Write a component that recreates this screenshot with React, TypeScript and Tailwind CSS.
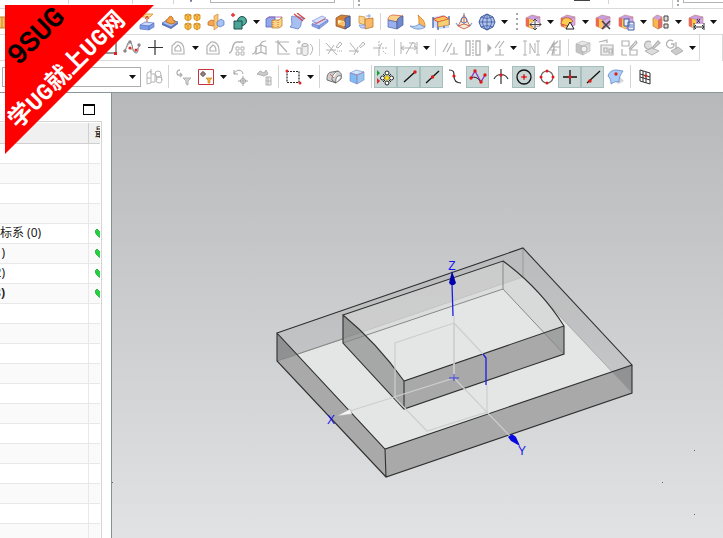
import { ReactNode } from "react";
import clsx from "clsx";

const GREY = "#b2b2b2";
const DARK = "#333333";

function Cube({ top, left, right, edge }: { top: string; left: string; right: string; edge: string }) {
  return (
    <g stroke={edge} strokeWidth="0.6">
      <path d="M2 5 8 2 16 4 9 7Z" fill={top} />
      <path d="M2 5 9 7 9 16 2 13Z" fill={left} />
      <path d="M9 7 16 4 16 12 9 16Z" fill={right} />
    </g>
  );
}

const purpleCube = (
  <g>
    <Cube top="#c79fe2" left="#fbb040" right="#d3a9ea" edge="#c07a86" />
    <path d="M2 5 5 6V14L2 13Z" fill="#ee6a50" />
    <path d="M5 6 9 7V16L5 14Z" fill="#fdc751" />
  </g>
);

const icons: Record<string, ReactNode> = {
  pattern: (
    <g fill="#f7c36a" stroke="#c98321">
      <path d="M0 4H11V15H0Z M4 4V15 M8 4V15" />
    </g>
  ),
  extrude: (
    <g>
      <path d="M5 3 8 1 15 1 12 4 4 4Z" fill="#fbe0a0" stroke="#e0a040" />
      <path d="M9 9V4M7 6 9 3 11 6" fill="none" stroke="#cf4a28" />
      <path d="M2 12 7 9 16 10 11 13Z" fill="#cfdcff" stroke="#5d79c8" strokeWidth="0.7" />
      <path d="M2 12 11 13V17L2 16ZM11 13 16 10V14L11 17Z" fill="#809be5" stroke="#5d79c8" strokeWidth="0.7" />
    </g>
  ),
  emboss: (
    <g>
      <path d="M1 10 8 6 17 9 10 14Z" fill="#a9bff0" stroke="#4565b0" strokeWidth="0.7" />
      <path d="M1 10 10 14V16L1 12ZM10 14 17 9V11L10 16Z" fill="#5874ba" />
      <path d="M5 9V7L7 6 8 4 10 3 12 5V7L14 8V10L10 11Z" fill="#f2a34a" stroke="#b86414" strokeWidth="0.8" />
    </g>
  ),
  fourCubes: (
    <g fill="#fbc14a" stroke="#d18a1c" strokeWidth="0.9">
      {[[1, 2], [10, 2], [1, 11], [10, 11]].map(([x, y]) => (
        <path key={`${x}-${y}`} d={`M${x} ${y}l3 -1 3 1v4l-3 2 -3 -2zl3 1 3 -1m-3 1v4`} />
      ))}
    </g>
  ),
  mirror: (
    <g>
      <path d="M1 9 4 7 9 8V12L6 13 1 12Z" fill="#f4a558" stroke="#b9671e" strokeWidth="0.7" />
      <path d="M7 3 11 1V14L7 17Z" fill="#fbc77a" stroke="#d08a35" strokeWidth="0.7" />
      <path d="M10 9 14 6 17 8V12L13 14 10 12Z" fill="#a9c4f4" stroke="#4c72bb" strokeWidth="0.7" />
    </g>
  ),
  unite: (
    <g>
      <circle cx="12" cy="8" r="4.5" fill="#52ad9c" stroke="#1c4f48" />
      <path d="M4 8H12V16H4Z" fill="#4aa596" stroke="#1c4f48" />
      <path d="M1 2H5M3 0V4" stroke="#e03028" strokeWidth="1.4" />
    </g>
  ),
  trimBody: (
    <g strokeWidth="0.8">
      <path d="M1 6 4 4H10V14H1Z" fill="#8fa8ed" stroke="#526bb5" />
      <path d="M7 7H14L17 4V13L14 15H7Z" fill="#fbd487" stroke="#b88432" />
      <path d="M1 6 4 4H17" fill="none" stroke="#a25db5" />
      <path d="M8 7V15M13 7V15" stroke="#d9502c" strokeDasharray="1 1" />
    </g>
  ),
  thicken: (
    <g>
      <path d="M4 3C8 5 10 2 16 6C11 9 15 13 10 16L2 14C6 11 2 7 4 3Z" fill="#a8bff2" stroke="#5d7cc6" strokeWidth="0.8" />
      <path d="M6 1 15 8M9 0 17 6" stroke="#dc4343" strokeWidth="1.3" />
    </g>
  ),
  offset: (
    <g>
      <path d="M1 11 11 5 17 7 8 13Z" fill="#c7d5fa" stroke="#6882ce" strokeWidth="0.7" />
      <path d="M1 11V13L8 16V13ZM8 13V16L17 9V7Z" fill="#8da4e6" stroke="#6882ce" strokeWidth="0.7" />
      <path d="M1 8 11 3 15 5 6 10Z" fill="#d5defa" stroke="#7f94d8" strokeWidth="0.7" />
      <path d="M4 11 14 6" stroke="#e35353" fill="none" />
    </g>
  ),
  shell: (
    <g>
      <path d="M2 5 7 2 16 3 16 13 11 16 2 13Z" fill="#d58234" stroke="#7e4f2b" strokeWidth="0.7" />
      <path d="M4 7 10 8V13L4 11Z" fill="#fff1cf" />
      <path d="M11 5 16 3V13L11 16Z" fill="#607cc4" stroke="#344f94" strokeWidth="0.7" />
      <path d="M4 11 8 8 11 9V13Z" fill="#f9c160" />
    </g>
  ),
  copyFace: (
    <g strokeWidth="0.8">
      <path d="M2 3 8 4V12L2 10Z" fill="#fad48d" stroke="#cc913c" />
      <path d="M8 6 16 5V14L8 16Z" fill="#f9b868" stroke="#bd7628" />
      <path d="M2 12H8V15H4ZM9 3H14M12 1V5" fill="#c9d7fb" stroke="#7893dc" />
    </g>
  ),
  blend: (
    <g strokeWidth="0.7">
      <path d="M2 7C2 3 5 2 8 2L17 3C13 4 11 6 11 9Z" fill="#fbd28a" stroke="#d24e36" />
      <path d="M2 7 11 9V16L2 14Z" fill="#9bb1ed" stroke="#4b65a9" />
      <path d="M11 9C11 6 13 4 17 3V12L11 16Z" fill="#6f8ad1" stroke="#3f5691" />
    </g>
  ),
  sheet: (
    <g>
      <path d="M9 2C13 6 16 7 16 14L10 12C10 8 10 5 9 2Z" fill="#fbb95b" stroke="#cf7c20" strokeWidth="0.8" />
      <path d="M1 13C5 14 8 13 10 11L16 14C12 17 6 17 1 13Z" fill="#b9d3f6" stroke="#668cc7" strokeWidth="0.8" />
    </g>
  ),
  ruled: (
    <g>
      <path d="M1 4 11 2 17 5V15L6 16 1 13Z" fill="#cddcff" />
      <path d="M1 6 12 3 17 6 6 9Z" fill="#fbc65d" stroke="#df4839" />
      <path d="M1 4V15M6 9V17M12 9V15M17 3V12" stroke="#4062ad" strokeWidth="1.3" />
      <path d="M6 9 17 6V12L6 14Z" fill="#f9cf76" stroke="#bf7427" strokeWidth="0.6" />
    </g>
  ),
  cone: (
    <g fill="none">
      <path d="M9 2 3 13 9 16 15 13Z" fill="#f6eadd" stroke="#cf6d4d" />
      <path d="M9 2V11M3 13 9 11 15 13" stroke="#cf6d4d" />
      <circle cx="9" cy="7" r="3" stroke="#5a83c2" />
      <path d="M1 10 3 13M17 10 15 13M9 2V0" stroke="#5a83c2" />
    </g>
  ),
  sphere: (
    <g fill="none" stroke="#3e5ba0">
      <path d="M9 1 15 4 17 9 15 14 9 17 3 14 1 9 3 4Z" fill="#b2c3ec" />
      <path d="M9 1V17M1 9H17M9 1C3 6 3 12 9 17M9 1C15 6 15 12 9 17M3 4Q9 7 15 4M3 14Q9 11 15 14" strokeWidth="0.8" />
    </g>
  ),
  moveFace: (
    <g>
      {purpleCube}
      <path d="M11 6V16M6 11H16" stroke="#fff" strokeWidth="3" />
      <path d="M11 6V17M6 11.5H17M9 8 11 6 13 8M9 15 11 17 13 15M8 9.5 6 11.5 8 13.5M15 9.5 17 11.5 15 13.5" fill="none" stroke="#444" />
    </g>
  ),
  resizeFace: (
    <g>
      {purpleCube}
      <path d="M2 11C3 6 5 4 10 5L14 8 9 13Z" fill="#fbce51" stroke="#ce5c35" />
      <path d="M11 9 15 16H7Z" fill="#fff" stroke="#222" />
    </g>
  ),
  deleteFace: (
    <g>
      {purpleCube}
      <path d="M8 8 16 16M16 8 8 16" stroke="#444" strokeWidth="1.6" />
    </g>
  ),
  copyBody: (
    <g>
      {purpleCube}
      <path d="M7 6H12V13H7ZM11 9H17V17H11Z" fill="#e8eeff" stroke="#435da0" />
      <path d="M12 12H16M12 14H16" stroke="#6680c0" />
    </g>
  ),
  patternFace: (
    <g>
      <path d="M1 5 5 2 10 4V14L6 16 1 13Z" fill="#f9b84a" stroke="#c3733b" strokeWidth="0.7" />
      <path d="M6 7 10 4V14L6 16Z" fill="#df6d66" />
      <path d="M1 5 5 2 10 4 6 7Z" fill="#c9a2e4" />
      <path d="M12 3H16V8H12ZM12 11H16V15H12Z" fill="#ddd" stroke="#444" />
    </g>
  ),
  linearDim: (
    <g>
      {purpleCube}
      <path d="M6 11H18V17H6Z" fill="#fff" />
      <path d="M7 10V17M17 10V17M7 14H17M9 12 7 14 9 16M15 12 17 14 15 16" stroke="#333" fill="none" />
      <path d="M10 6 13 10M13 6 10 10" stroke="#333" />
    </g>
  ),
  rect: (
    <g>
      <path d="M5 3H16V14H5" fill="none" stroke={DARK} />
      <path d="M14 13H17V16H14Z" fill="#e02020" />
    </g>
  ),
  spline: (
    <g>
      <path d="M1 13C4 10 4 2 7 3C10 4 9 14 13 14C16 14 14 8 17 7" fill="none" stroke="#777" />
      <path d="M1 12 7 3M7 9 12 13 17 6" stroke="#aaa" fill="none" />
      <g fill="#8a8a8a">
        <circle cx="2" cy="12" r="1.7" /><circle cx="7" cy="3" r="1.7" /><circle cx="16" cy="6" r="1.7" />
      </g>
      <g fill="#dc3030">
        <circle cx="7" cy="9" r="1.6" /><circle cx="13" cy="11" r="1.6" />
      </g>
    </g>
  ),
  plus: <path d="M9 1V16M2 8.5H17" stroke={DARK} strokeWidth="1.2" />,
  offsetCurve: (
    <g fill="none" stroke={GREY} strokeWidth="1.2">
      <path d="M3 15V7L7 3C12 2 15 6 15 11V15Z" />
      <path d="M6 12V9L9 6C11 7 12 9 12 12Z" />
    </g>
  ),
  curvePattern: (
    <g fill="none" stroke={GREY}>
      <path d="M2 14C7 14 4 3 10 3H16" strokeWidth="1.5" />
      <path d="M9 8H12V11H9ZM14 8H17V11H14ZM9 13H12V16H9ZM14 13H17V16H14Z" />
    </g>
  ),
  projectCurve: (
    <g fill="none" stroke={GREY} strokeWidth="1.2">
      <path d="M2 15C6 15 5 12 7 9M10 6C11 3 13 2 16 2" />
      <path d="M6 8 11 6V13L6 15ZM11 6 16 8V15L11 13Z" />
    </g>
  ),
  trimCurve: (
    <g fill="none" stroke={GREY} strokeWidth="1.2">
      <path d="M2 3H16M5 1V15H17M5 3 14 13" />
    </g>
  ),
  cylinder: (
    <g fill="#eee" stroke={GREY}>
      <path d="M6 6V15C7 17 11 17 12 15V6Z" />
      <ellipse cx="9" cy="6" rx="3" ry="1.5" />
      <path d="M1 3H5M3 1V5M14 5C18 8 17 12 14 16M1 9H5V15H1Z" fill="none" />
    </g>
  ),
  quickTrim: (
    <g fill="none" stroke={GREY}>
      <path d="M1 4 12 16M3 15 9 6M1 11H11" />
      <path d="M11 8 15 3 17 5 13 9Z" />
      <path d="M12 12H17" strokeDasharray="1 1" />
    </g>
  ),
  quickExtend: (
    <g fill="none" stroke={GREY}>
      <path d="M2 4 10 14M1 12H11M6 16 10 8M11 8 15 3 17 5 12 9" />
    </g>
  ),
  corner: (
    <g fill="none" stroke={GREY}>
      <path d="M2 9H10M8 17V9L11 4" />
      <path d="M11 9H17M8 2V7M12 12 15 15" strokeDasharray="2 1" />
    </g>
  ),
  rapidDim: (
    <g fill="none" stroke={GREY}>
      <path d="M1 3V15M17 3V15M1 9H17M4 7 1 9 4 11M14 7 17 9 14 11M6 15 13 3M9 4H15V8" />
    </g>
  ),
  constraint: <path d="M2 13 7 4M6 13 11 4M9 15H17M13 15V8" fill="none" stroke={GREY} strokeWidth="1.2" />,
  symmetric: (
    <g fill="none" stroke={GREY} strokeWidth="1.3">
      <path d="M6 2H2V16H6V6ZM12 2H16V16H12V6Z" />
      <path d="M9 1V17" strokeDasharray="2 1" />
    </g>
  ),
  autoConstraint: (
    <g fill="none" stroke={GREY} strokeWidth="1.2">
      <path d="M1 6V12L4 9Z" fill={GREY} />
      <path d="M8 9 13 2M12 9 17 2M8 16H17M13 16V10" />
    </g>
  ),
  showConstraint: (
    <g fill="none" stroke={GREY}>
      <path d="M1 2H5M1 16H5M3 2V16M8 4V15M16 2V16M14 2H18M14 16H18M8 5 13 14V4" />
    </g>
  ),
  convertRef: (
    <g fill="none" stroke={GREY}>
      <path d="M2 15 9 3V15M4 11H12M13 2 6 9M9 8H15V16H7ZM15 1V11" strokeWidth="1.2" />
    </g>
  ),
  greyCube: (
    <g>
      <Cube top="#e5e5e5" left="#c4c4c4" right="#dadada" edge={GREY} />
      <circle cx="10" cy="10" r="3" fill="#f2f2f2" stroke={GREY} />
    </g>
  ),
  greyFrame: (
    <g fill="#eee" stroke={GREY}>
      <path d="M2 3 10 1V4M4 6H16V16H4ZM7 9H10V13H7ZM12 10H15V14H12Z" strokeWidth="1.2" />
    </g>
  ),
  greySwap: (
    <g fill="none" stroke={GREY} strokeWidth="1.2">
      <path d="M2 2H9V7H2ZM10 11H17V16H10ZM2 10V16H7M9 10 16 2 17 4 10 11" />
    </g>
  ),
  greyPen: (
    <g fill="#ddd" stroke={GREY}>
      <path d="M2 12 9 9 16 12 9 16Z" />
      <path d="M8 3A4 4 0 1 0 9 8M9 9 15 2 17 4 10 10" strokeWidth="1.2" />
    </g>
  ),
  greyUpdate: (
    <g fill="#ccc" stroke={GREY}>
      <path d="M5 12 12 8 17 12 10 16Z" />
      <path d="M7 2A4 4 0 1 0 8 7V5H5M10 3V10" fill="none" strokeWidth="1.3" />
    </g>
  ),
  assembly: (
    <g fill="none" stroke="#b5b5b5">
      <path d="M2 5 6 3V15L2 16ZM6 6H10V14H6M2 10H6M6 1V5" />
      <circle cx="13" cy="6" r="3" /><circle cx="14" cy="12" r="3" /><path d="M11 7 12 12M16 7 17 12" />
    </g>
  ),
  filterGrey: (
    <g fill="#d4d4d4" stroke={GREY}>
      <path d="M9 10H17L14 13V17L12 16V13Z" />
      <path d="M6 2C3 2 2 5 4 7H8M6 5 8 7 6 9" fill="none" strokeWidth="1.3" />
    </g>
  ),
  filterRed: (
    <g>
      <path d="M1.5 1.5H16.5V16.5H1.5Z" fill="#fff" stroke="#c8323a" />
      <circle cx="6" cy="6" r="2" fill="none" stroke="#8a5555" /><path d="M6 3V9M3 6H9" stroke="#444" strokeWidth="0.8" />
      <path d="M9 10H15L13 12V15L11 15V12Z" fill="#f9b339" stroke="#cf8416" strokeWidth="0.7" />
    </g>
  ),
  rotateGrey: (
    <g fill="none" stroke="#a0a0a0">
      <path d="M2 2V6H6M2 6C4 1 10 1 11 6" />
      <path d="M11 8V18M6 13H16" /><circle cx="11" cy="13" r="2.5" />
    </g>
  ),
  moveGrey: (
    <g fill="#ccc" stroke="#b0b0b0">
      <path d="M2 6 5 3 9 5 11 2 13 6 9 8Z" />
      <path d="M11 9H16V17H11ZM11 13H16M13 9V17" fill="#eee" />
    </g>
  ),
  marquee: (
    <g>
      <path d="M3 3.5H15V14.5H3Z" fill="none" stroke="#222" strokeDasharray="2 1" strokeWidth="1.2" />
      <circle cx="3" cy="3" r="1.5" fill="#e02828" /><circle cx="16" cy="15" r="1.5" fill="#e02828" />
    </g>
  ),
  wireBody: (
    <g stroke="#555" strokeWidth="0.8">
      <path d="M2 11C2 6 4 4 7 4L13 3C17 5 17 8 16 11L11 15 2 12Z" fill="#cfcfcf" />
      <path d="M7 12C7 7 9 5 13 3M11 15C10 9 13 7 16 8M7 12 11 15" fill="#fff" />
      <path d="M5 6 9 10" stroke="#df5252" />
    </g>
  ),
  blueCube: (
    <g>
      <Cube top="#cfe6ff" left="#7ebcf3" right="#98c5ee" edge="#7087c9" />
      <path d="M2 5 9 7 16 4M9 7V16" fill="none" stroke="#c07ea7" strokeDasharray="1 1" />
    </g>
  ),
  snap: (
    <g>
      <path d="M0 2V8L3 5Z" fill="#14a02c" />
      <path d="M0 10V16L3 13Z" fill="#e02828" />
      <g fill="#fff" stroke="#222">
        <circle cx="10" cy="5" r="2" /><circle cx="10" cy="15" r="2" /><circle cx="5.5" cy="10" r="2" /><circle cx="14.5" cy="10" r="2" />
        <path d="M6 6 8 8M14 6 12 8M6 14 8 12M14 14 12 12" />
      </g>
      <path d="M10 7.5 12.5 10 10 12.5 7.5 10Z" fill="#ffe22c" stroke="#c9a300" />
    </g>
  ),
  endPoint: (
    <g><path d="M4 14 15 4" stroke="#111" strokeWidth="1.3" /><circle cx="15" cy="4" r="1.7" fill="#e01818" /></g>
  ),
  midPoint: (
    <g><path d="M3 15 16 3" stroke="#111" strokeWidth="1.3" /><circle cx="9.5" cy="9" r="1.7" fill="#e01818" /></g>
  ),
  controlPoint: (
    <g>
      <path d="M3 2C8 2 8 4 8 8C8 13 10 15 15 15" fill="none" stroke="#333" strokeWidth="1.2" />
      <circle cx="8" cy="8" r="1.6" fill="#e01818" />
    </g>
  ),
  knotPoint: (
    <g>
      <path d="M2 10 6 3 12 14 16 7" fill="none" stroke="#8c33c8" strokeWidth="1.3" />
      <path d="M2 10Q7 7 12 14" fill="none" stroke="#222" />
      <g fill="#e01818">
        <circle cx="2" cy="10" r="1.7" /><circle cx="6" cy="3" r="1.7" /><circle cx="12" cy="14" r="1.7" /><circle cx="16" cy="7" r="1.7" />
      </g>
    </g>
  ),
  intersection: (
    <g>
      <path d="M9 1V16M2 11C5 5 13 5 16 11" fill="none" stroke="#333" strokeWidth="1.2" />
      <circle cx="9" cy="7" r="1.6" fill="#e01818" />
    </g>
  ),
  arcCenter: (
    <g><circle cx="9" cy="9" r="7" fill="none" stroke="#111" strokeWidth="1.3" /><path d="M6 9H12M9 6V12" stroke="#e01818" /><circle cx="9" cy="9" r="1.4" fill="#e01818" /></g>
  ),
  quadrant: (
    <g>
      <circle cx="9" cy="9" r="6" fill="none" stroke="#666" strokeWidth="1.2" />
      <g fill="#e01818">
        <circle cx="9" cy="3" r="1.5" /><circle cx="9" cy="15" r="1.5" /><circle cx="3" cy="9" r="1.5" /><circle cx="15" cy="9" r="1.5" />
      </g>
    </g>
  ),
  existing: (
    <g><path d="M9 2V16M2 9H16" stroke="#111" strokeWidth="1.3" /><circle cx="9" cy="9" r="1.7" fill="#e01818" /></g>
  ),
  onCurve: (
    <g><path d="M3 15 16 3" stroke="#111" strokeWidth="1.3" /><circle cx="6" cy="13" r="1.7" fill="#e01818" /></g>
  ),
  onFace: (
    <g>
      <path d="M9 15 12 8 17 13 12 16Z" fill="#d8d8d8" />
      <path d="M1 8C3 2 7 2 10 2L16 3C13 7 12 10 12 14C9 13 7 14 4 16C4 12 3 10 1 8Z" fill="#a9cdf6" stroke="#5f87c6" strokeWidth="0.8" />
      <circle cx="9" cy="6" r="1.7" fill="#e02020" />
    </g>
  ),
  grid: (
    <g fill="none" stroke="#333">
      <path d="M4 2 14 5V16L4 13ZM7 3V14M10 4V15M4 6 14 9M4 9 14 12" />
      <circle cx="10" cy="8" r="1.4" fill="#e02020" stroke="none" />
    </g>
  ),
};

// "|" is a separator, "v" a drop-down arrow, ":" a grip and "+name" a pressed tool
const featureTools =
  "extrude emboss fourCubes mirror unite v trimBody thicken offset shell copyFace | blend sheet ruled cone sphere v : moveFace v resizeFace v deleteFace copyBody v patternFace v linearDim v moveFace".split(" ");
const sketchTools =
  "rect spline plus offsetCurve v offsetCurve curvePattern projectCurve trimCurve cylinder | quickTrim quickExtend corner | rapidDim v | constraint symmetric autoConstraint v showConstraint convertRef | greyCube greyFrame greySwap greyPen greyUpdate v".split(" ");
const selectionTools =
  "assembly | filterGrey filterRed v rotateGrey moveGrey | marquee v | wireBody blueCube | +snap +endPoint +midPoint controlPoint +knotPoint intersection +arcCenter quadrant +existing +onCurve onFace | grid".split(" ");

function Caret() {
  return (
    <svg viewBox="0 0 7 4" className="h-1 w-[7px]">
      <path d="M0 0H7L3.5 4Z" fill="#111" />
    </svg>
  );
}

function Grip() {
  return (
    <span className="flex w-[11px] shrink-0 flex-col items-end gap-[3px] pr-[3px]">
      {[0, 1, 2, 3].map((i) => (
        <span key={i} className="size-[2px] bg-[#a8a8a8]" />
      ))}
    </span>
  );
}

function Tools({ items }: { items: string[] }) {
  return items.map((item, i) => {
    if (item === "|") {
      return (
        <span key={i} className="flex h-full w-[6px] shrink-0 justify-center py-1">
          <span className="w-px bg-[#d4d4d4]" />
        </span>
      );
    }
    if (item === ":") return <Grip key={i} />;
    if (item === "v") {
      return (
        <button key={i} aria-label="More" className="flex h-[22px] w-3 shrink-0 items-center justify-center">
          <Caret />
        </button>
      );
    }
    const pressed = item.startsWith("+");
    const name = pressed ? item.slice(1) : item;
    return (
      <button
        key={i}
        aria-label={name}
        className={clsx(
          "flex h-[22px] w-[23px] shrink-0 items-center justify-center",
          pressed && "border border-[#a5c0bc] bg-[#c8d7d5]"
        )}
      >
        <svg viewBox="0 0 18 18" className="size-[18px] shrink-0">
          {icons[name]}
        </svg>
      </button>
    );
  });
}

function Toolbars() {
  return (
    <header className="overflow-hidden border-b border-[#89979b] bg-white">
      <div className="flex h-[9px] border-b border-[#d9d9d9]">
        <span className="h-1 w-[69px] border-r border-[#d4d4d4]" />
        <span className="h-1 w-16 border-r border-[#d4d4d4]" />
        <span className="h-1 w-[41px] border-r border-[#d4d4d4]" />
        <span className="ml-4 size-[2px] rounded-b bg-[#777799]" />
        <span className="ml-[18px] h-[3px] w-[125px] border-x border-b border-[#b4b4b4]" />
        <span className="h-2 w-[19px] border-r border-[#d4d4d4]" />
        <span className="ml-1 flex flex-col gap-[2px]">
          <span className="size-[2px] bg-[#a8a8a8]" />
          <span className="size-[2px] bg-[#a8a8a8]" />
        </span>
        <span className="ml-[214px] h-px w-4 bg-[#444]" />
        <span className="h-1 w-[19px] border-r border-[#d4d4d4]" />
        <span className="h-2 w-16 border-r border-[#d4d4d4]" />
        <span className="ml-1 flex flex-col gap-[2px]">
          <span className="size-[2px] bg-[#a8a8a8]" />
          <span className="size-[2px] bg-[#a8a8a8]" />
        </span>
        <span className="ml-1 h-[3px] flex-1 border-b border-l border-[#b4b4b4]" />
      </div>
      <div className="flex h-[26px] items-center border-b border-[#d9d9d9]">
        <svg viewBox="6 0 18 18" className="size-[18px] shrink-0">{icons.pattern}</svg>
        <span className="w-[117px] shrink-0" />
        <Tools items={featureTools} />
      </div>
      <div className="flex h-[26px]">
        <div className="flex w-[700px] items-center border-r border-b border-[#d9d9d9] pl-[97px]">
          <Tools items={sketchTools} />
        </div>
        <span className="ml-auto w-px bg-[#d9d9d9]" />
      </div>
      <div className="flex h-[31px] items-center pl-[2px]">
        <div className="relative mr-px h-5 w-[139px] shrink-0">
          <select aria-label="Selection scope" className="block size-full appearance-none rounded-none border border-[#adadad] bg-white" />
          <span className="pointer-events-none absolute inset-y-0 right-[5px] flex items-center">
            <Caret />
          </span>
        </div>
        <Tools items={selectionTools} />
      </div>
    </header>
  );
}

interface TreeRow {
  label?: string;
  short?: boolean;
  bold?: boolean;
}

const rows: TreeRow[] = [
  {}, {}, {}, {},
  { label: "标系 (0)" },
  { label: ")", short: true },
  { label: "2)", short: true },
  { label: "3)", short: true, bold: true },
  ...Array.from({ length: 12 }, () => ({})),
];

function PartNavigator() {
  return (
    <aside className="flex w-28 shrink-0 flex-col overflow-hidden border-r border-[#849296] bg-white">
      <div className="flex h-7 shrink-0 items-center justify-end pr-4">
        <button aria-label="Maximize" className="mt-1 h-[11px] w-3 border border-t-2 border-black" />
      </div>
      <div className="h-0 w-[102px] flex-1 overflow-hidden border-t border-r border-[#d5d5d5] pt-px pr-px">
        <table className="w-full table-fixed border-collapse text-xs text-[#222]">
          <thead>
            <tr className="h-5 border-b border-[#cfcfcf] bg-[#f0f0f0]">
              <th className="w-[88px] border-r border-[#d0d0d0] p-0" />
              <th className="p-0 font-normal">
                <span className="block h-4 overflow-hidden pl-[6px] text-left leading-4 whitespace-nowrap">最</span>
              </th>
            </tr>
          </thead>
          <tbody>
            {rows.map((row, i) => (
              <tr key={i} className="h-5 border-b border-[#e8e8e8] even:bg-[#fafafa]">
                <td className="border-r border-[#e8e8e8] p-0">
                  <span
                    className={clsx(
                      "flex h-4 items-center overflow-hidden whitespace-nowrap",
                      row.short && "w-[5px] justify-end",
                      row.bold && "font-bold"
                    )}
                  >
                    {row.label}
                  </span>
                </td>
                <td className="p-0">
                  {row.label && (
                    <span className="block overflow-hidden pl-[6px]">
                      <svg viewBox="0 0 12 10" className="h-[10px] w-3 max-w-none">
                        <path d="M0 3 2 1 5 4 10 0 12 2 6 10 4 9 1 6Z" fill="#1fd43c" stroke="#0a8c20" strokeWidth="0.6" />
                      </svg>
                    </span>
                  )}
                </td>
              </tr>
            ))}
          </tbody>
        </table>
      </div>
    </aside>
  );
}

function Scene() {
  return (
    <main className="flex-1 bg-linear-to-b from-[#b7b8b9] to-[#e2e3e5]">
      <svg viewBox="112 93 611 445" className="block w-full" fontFamily="Liberation Sans, sans-serif">
        {/* base plate */}
        <path d="M277 361 523 277 632 393 386 477Z" fill="#e4e5e5" />
        <path d="M277 333 523 248V277L277 361Z" fill="#000" fillOpacity="0.06" />
        <path d="M523 248 632 365V393L523 277Z" fill="#000" fillOpacity="0.06" />
        <path d="M277 333 385 449 386 477 277 361Z" fill="#000" fillOpacity="0.26" />
        <path d="M385 449 632 365V393L386 477Z" fill="#000" fillOpacity="0.26" />
        <path d="M277 361 523 277 632 393" fill="none" stroke="#999" strokeOpacity="0.7" />
        <path d="M277 361 343 339" stroke="#888" />
        <path d="M523 248V277" stroke="#999" />

        {/* arched block */}
        <path d="M343 315 503 261Q540 288 564 326V354L404 409 343 343Z" fill="#e4e5e5" fillOpacity="0.6" />
        <path d="M343 315 503 261V289L343 343Z" fill="#000" fillOpacity="0.04" />
        <path d="M503 261Q540 288 564 326V354L503 289Z" fill="#000" fillOpacity="0.05" />
        <path d="M343 315Q377 343 404 381V409L343 343Z" fill="#000" fillOpacity="0.27" />
        <path d="M404 381 564 326V354L404 409Z" fill="#000" fillOpacity="0.26" />
        <path d="M343 343 503 289 564 354M503 289V261" fill="none" stroke="#888" />

        <g fill="none" stroke="#303030" strokeWidth="1.1">
          <path d="M277 333 523 248 632 365 385 449ZM277 333V361L386 477 632 393V365M385 449 386 477" />
          <path d="M343 315 503 261Q540 288 564 326L404 381Q377 343 343 315V343L404 409 564 354V326M404 381V409" />
        </g>

        {/* datum planes and axes */}
        <g fill="none" stroke="#cdcecf" strokeWidth="1.2">
          <path d="M454 378V323L395 343V398L427 431 487 412V385M454 323 483 354" />
          <path d="M454 316V378L350 411M454 378 510 436" />
        </g>
        <path d="M337 416 350 409 352 414Z" fill="#f4f4f4" stroke="#aaa" strokeWidth="0.5" />
        <g fill="none" stroke="#1c1ce8" strokeWidth="1.3">
          <path d="M453 316 452 283M483 354 486 358V385" />
          <path d="M449 378H459M454 374V381" strokeWidth="0.8" />
        </g>
        <path d="M452 271 456 283 454 285H451L449 283Z" fill="#0000b0" />
        <path d="M508 437 512 434 516 437 520 446 511 441Z" fill="#0808e0" />
        <g fill="#1414f0" fontSize="12" textAnchor="middle">
          <text x="452" y="270">Z</text>
          <text x="331" y="424">X</text>
          <text x="522" y="455">Y</text>
        </g>
        <path d="M112 482h1v1h-1zM662 482h1v1h-1zM694 450h1v1h-1zM694 514h1v1h-1z" fill="#666" />
      </svg>
    </main>
  );
}

function Ribbon() {
  return (
    <div className="absolute top-[5px] left-[5px] size-[149px] bg-[#ff0000] [clip-path:polygon(0_0,100%_0,0_100%)]">
      <div className="absolute top-8 left-8 -translate-1/2 -rotate-45 font-['Liberation_Mono',monospace] text-[28px] leading-7 text-black [-webkit-text-stroke:1px_black]">
        9SUG
      </div>
      <div className="absolute top-[66px] left-[63px] -translate-1/2 -rotate-45 font-['Liberation_Mono','Noto_Sans_CJK_SC',monospace] text-[24px] leading-7 font-bold whitespace-nowrap text-white">
        学UG就上UG网
      </div>
    </div>
  );
}

export default function App() {
  return (
    <div className="relative flex min-h-screen flex-col overflow-hidden bg-white font-['Noto_Sans','Noto_Sans_CJK_SC',sans-serif]">
      <Toolbars />
      <div className="flex flex-1">
        <PartNavigator />
        <Scene />
      </div>
      <Ribbon />
    </div>
  );
}
